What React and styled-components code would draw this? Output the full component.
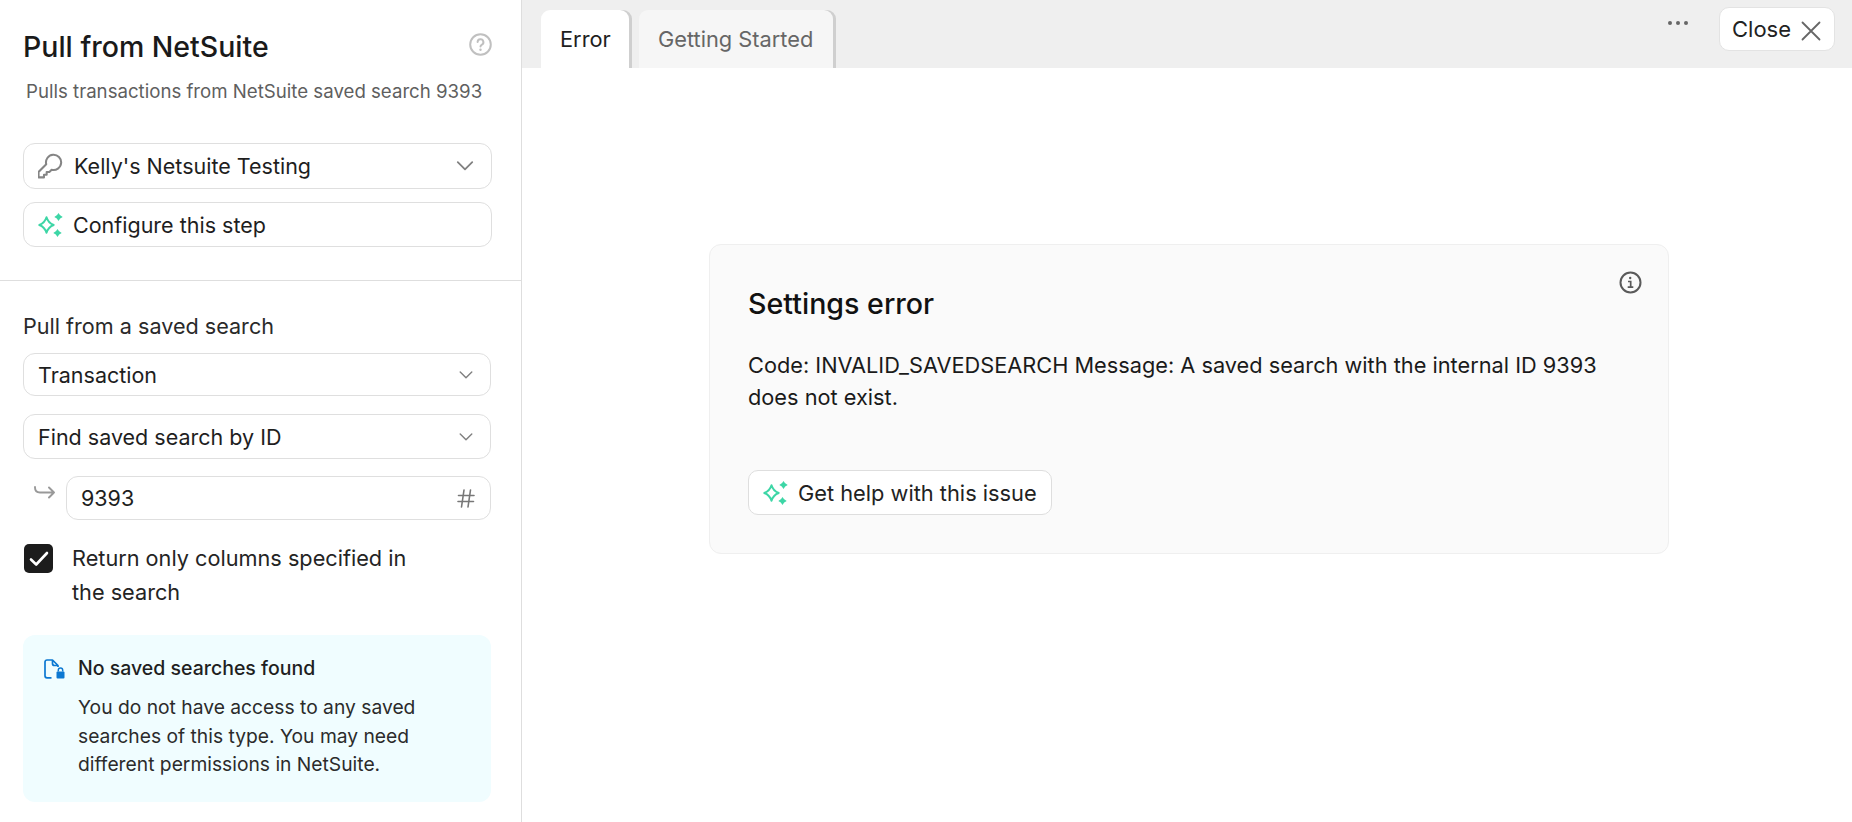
import React from "react";
import styled, { createGlobalStyle } from "styled-components";

const Global = createGlobalStyle`
  html, body { margin: 0; padding: 0; background: #fff; }
  body { font-family: Inter, "Noto Sans", sans-serif; color: #1c1c1c; }
  * { box-sizing: border-box; }
`;

const Page = styled.div`
  display: flex;
  width: 1852px;
  height: 822px;
  overflow: hidden;
`;

const Sidebar = styled.aside`
  flex: none;
  width: 522px;
  border-right: 1px solid #dedede;
  display: flex;
  flex-direction: column;
`;

const Head = styled.div`
  padding: 30px 29px 0 23px;
  border-bottom: 1px solid #dedede;
  height: 281px;
`;

const TitleRow = styled.div`
  display: flex;
  justify-content: space-between;
  align-items: center;
  height: 34px;
`;

const Title = styled.h1`
  margin: 0;
  font-size: 28.5px;
  font-weight: 500;
  line-height: 32px;
  color: #1a1a1a;
`;

const HelpSlot = styled.div`
  display: flex;
  margin-top: -6px;
`;

const Subtitle = styled.p`
  margin: 14px 0 0 3px;
  font-size: 18.65px;
  line-height: 26px;
  color: #5f5f5f;
  white-space: nowrap;
`;

const Field = styled.div`
  display: flex;
  align-items: center;
  width: ${(p) => p.$width || 469}px;
  height: ${(p) => p.$height || 45}px;
  margin-top: ${(p) => p.$top || 0}px;
  padding: 0 ${(p) => p.$padRight || 16}px 0 14px;
  border: 1px solid #dfdfdf;
  border-radius: 12px;
  background: #fff;
  font-size: 21.5px;
  color: #1e1e1e;
`;

const FieldText = styled.span`
  flex: 1;
  white-space: nowrap;
  margin-left: ${(p) => p.$gap || 0}px;
`;

const Body = styled.div`
  padding: 31px 0 0 23px;
`;

const Label = styled.div`
  font-size: 21.6px;
  line-height: 28px;
  color: #2a2a2a;
`;

const InputRow = styled.div`
  display: flex;
  align-items: flex-start;
  margin-top: 17px;
`;

const ArrowSlot = styled.div`
  display: flex;
  width: 43px;
  padding: 10px 0 0 11px;
`;

const CheckRow = styled.div`
  display: flex;
  margin-top: 24px;
`;

const CheckBox = styled.div`
  flex: none;
  width: 29px;
  height: 29px;
  margin: 0 19px 0 1px;
  border-radius: 5px;
  background: #1c1c1c;
  display: flex;
  align-items: center;
  justify-content: center;
`;

const CheckLabel = styled.div`
  width: 350px;
  font-size: 21.7px;
  line-height: 34px;
  margin-top: -3px;
  color: #242424;
`;

const Notice = styled.div`
  display: flex;
  width: 468px;
  height: 167px;
  margin-top: 26px;
  padding: 21px 0 0 21px;
  border-radius: 12px;
  background: #f0fdff;
`;

const NoticeIcon = styled.div`
  flex: none;
  width: 34px;
  padding-top: 3px;
`;

const NoticeTitle = styled.div`
  font-size: 19.5px;
  font-weight: 500;
  line-height: 24px;
  color: #1f1f1f;
`;

const NoticeText = styled.div`
  margin-top: 13px;
  font-size: 19.25px;
  line-height: 28.5px;
  color: #2b2b2b;
  white-space: pre-line;
`;

const Main = styled.main`
  flex: 1;
  display: flex;
  flex-direction: column;
`;

const TopBar = styled.div`
  flex: none;
  display: flex;
  align-items: flex-start;
  height: 68px;
  padding: 10px 17px 0 19px;
  background: #efefef;
`;

const Tab = styled.div`
  width: ${(p) => p.$width}px;
  height: 58px;
  margin-right: 10px;
  padding-left: 19px;
  display: flex;
  align-items: center;
  border-radius: 9px 9px 0 0;
  background: ${(p) => (p.$active ? "#fff" : "#f6f6f6")};
  box-shadow: 3px 0 0 #cfcfcf;
  font-size: 21.8px;
  color: ${(p) => (p.$active ? "#1e1e1e" : "#666")};
`;

const TopActions = styled.div`
  margin-left: auto;
  margin-top: -3px;
  display: flex;
  align-items: center;
`;

const Dots = styled.div`
  display: flex;
  gap: 4px;
  margin: -12px 31px 0 0;
`;

const Dot = styled.span`
  width: 4px;
  height: 4px;
  border-radius: 50%;
  background: #666;
`;

const CloseButton = styled.div`
  width: 116px;
  height: 44px;
  padding-left: 12px;
  display: flex;
  align-items: center;
  gap: 10px;
  border: 1px solid #e3e3e3;
  border-radius: 10px;
  background: #fff;
  font-size: 22px;
  color: #222;
`;

const CloseIcon = styled.span`
  display: flex;
  margin-top: 3px;
`;

const Card = styled.section`
  position: relative;
  width: 960px;
  height: 310px;
  margin: 176px 0 0 187px;
  padding: 42px 40px 0 38px;
  border: 1px solid #efefef;
  border-radius: 12px;
  background: #fafafa;
`;

const InfoButton = styled.div`
  position: absolute;
  top: 26px;
  right: 26px;
  width: 23px;
  height: 23px;
`;

const CardTitle = styled.h2`
  margin: 0;
  font-size: 28.6px;
  font-weight: 500;
  line-height: 34px;
  color: #111;
`;

const CardText = styled.p`
  margin: 28px 0 0;
  font-size: 21.75px;
  line-height: 32px;
  color: #1a1a1a;
`;

const HelpButton = styled.div`
  display: flex;
  align-items: center;
  gap: 10px;
  width: fit-content;
  height: 45px;
  margin-top: 57px;
  padding: 0 14px;
  border: 1px solid #dedede;
  border-radius: 10px;
  background: #fff;
  font-size: 21.8px;
  color: #222;
`;

const SparkleGlyph = ({ cx, cy, rx, ry, c = 0.18 }) => {
  const ax = rx * c;
  const ay = ry * c;
  return (
    <path d={`M${cx} ${cy - ry} Q${cx + ax} ${cy - ay} ${cx + rx} ${cy} Q${cx + ax} ${cy + ay} ${cx} ${cy + ry} Q${cx - ax} ${cy + ay} ${cx - rx} ${cy} Q${cx - ax} ${cy - ay} ${cx} ${cy - ry} Z`} />
  );
};

const Sparkle = () => (
  <svg width="25" height="24" viewBox="0 0 25 24" style={{ flex: "none" }}>
    <g fill="none" stroke="#3dd6a6" strokeWidth="2" strokeLinejoin="round">
      <SparkleGlyph cx={8.5} cy={12} rx={7.2} ry={7.8} c={0.25} />
    </g>
    <g fill="#3dd6a6">
      <SparkleGlyph cx={20.5} cy={4} rx={4.2} ry={4} c={0.3} />
      <SparkleGlyph cx={19.5} cy={20} rx={4.2} ry={4} c={0.3} />
    </g>
  </svg>
);

const Chevron = ({ size = 18, color = "#808080" }) => (
  <svg width={size} height={size} viewBox="0 0 18 18" style={{ flex: "none" }}>
    <path d="M2.5 5.5 L9 12 L15.5 5.5" fill="none" stroke={color} strokeWidth="1.6" strokeLinecap="round" strokeLinejoin="round" />
  </svg>
);

const Key = () => (
  <svg width="26" height="26" viewBox="1 0 24 24" style={{ flex: "none" }}>
    <path d="M8.6 10.4 A7 7 0 1 1 13.6 15.4 L11.5 17.5 H9 V20 H6.5 V22.5 H1.5 V17.5 Z" fill="none" stroke="#858585" strokeWidth="1.9" strokeLinejoin="round" />
  </svg>
);

const Help = () => (
  <svg width="23" height="23" viewBox="0 0 23 23" style={{ flex: "none" }}>
    <circle cx="11.5" cy="11.5" r="10.3" fill="none" stroke="#c0c0c0" strokeWidth="2" />
    <path d="M8.6 9 A2.9 2.9 0 1 1 12.6 11.8 C11.8 12.3 11.5 12.8 11.5 13.6" fill="none" stroke="#c0c0c0" strokeWidth="2" strokeLinecap="round" />
    <circle cx="11.5" cy="16.8" r="1.2" fill="#c0c0c0" />
  </svg>
);

const Info = () => (
  <svg width="23" height="23" viewBox="0 0 23 23">
    <circle cx="11.5" cy="11.5" r="10" fill="none" stroke="#5a5a5a" strokeWidth="2" />
    <circle cx="11.2" cy="7" r="1.2" fill="#5a5a5a" />
    <path d="M9 10.5 H11.7 V16 M8.7 16.2 H14.3" fill="none" stroke="#5a5a5a" strokeWidth="1.7" />
  </svg>
);

const ReturnArrow = () => (
  <svg width="21" height="13" viewBox="0 0 21 13">
    <path d="M1 1 V1.5 C1 5 3 6.5 6 6.5 H20 M15 1.5 L20 6.5 L15 11.5" fill="none" stroke="#999" strokeWidth="1.9" strokeLinecap="round" strokeLinejoin="round" />
  </svg>
);

const Hash = () => (
  <svg width="18" height="19" viewBox="0 0 18 19" style={{ flex: "none" }}>
    <path d="M1.5 6.5 H17 M1 12.5 H16.5 M7 1 L4.5 18 M13.5 1 L11 18" fill="none" stroke="#777" strokeWidth="1.6" strokeLinecap="round" />
  </svg>
);

const Check = () => (
  <svg width="20" height="16" viewBox="0 0 20 16">
    <path d="M2 8.5 L7.2 13.5 L18 2" fill="none" stroke="#fff" strokeWidth="2.6" strokeLinecap="round" strokeLinejoin="round" />
  </svg>
);

const FileLock = () => (
  <svg width="21" height="20" viewBox="0 0 21 20">
    <path d="M7.5 18.8 H3 A2 2 0 0 1 1 16.8 V3 A2 2 0 0 1 3 1 H8.5 L14 6.5 V8 M8.5 1 V4.5 A2 2 0 0 0 10.5 6.5 H14" fill="none" stroke="#0c78d2" strokeWidth="1.7" strokeLinejoin="round" />
    <rect x="12.5" y="12.5" width="8" height="7" rx="1" fill="#0c78d2" />
    <path d="M14.3 12.5 V11.3 A2.2 2.2 0 0 1 18.7 11.3 V12.5" fill="none" stroke="#0c78d2" strokeWidth="1.5" />
  </svg>
);

const CloseX = () => (
  <svg width="20" height="20" viewBox="0 0 20 20" style={{ flex: "none" }}>
    <path d="M1.5 1.5 L18.5 18.5 M18.5 1.5 L1.5 18.5" stroke="#666" strokeWidth="1.8" strokeLinecap="round" />
  </svg>
);

export default function App() {
  return (
    <Page>
      <Global />
      <Sidebar>
        <Head>
          <TitleRow>
            <Title>Pull from NetSuite</Title>
            <HelpSlot>
              <Help />
            </HelpSlot>
          </TitleRow>
          <Subtitle>Pulls transactions from NetSuite saved search 9393</Subtitle>
          <Field $height={46} $top={39}>
            <Key />
            <FieldText $gap={10}>Kelly's Netsuite Testing</FieldText>
            <Chevron size={20} />
          </Field>
          <Field $height={45} $top={13}>
            <Sparkle />
            <FieldText $gap={10}>Configure this step</FieldText>
          </Field>
        </Head>
        <Body>
          <Label>Pull from a saved search</Label>
          <Field $width={468} $height={43} $top={13}>
            <FieldText>Transaction</FieldText>
            <Chevron size={16} />
          </Field>
          <Field $width={468} $height={45} $top={18}>
            <FieldText>Find saved search by ID</FieldText>
            <Chevron size={16} />
          </Field>
          <InputRow>
            <ArrowSlot>
              <ReturnArrow />
            </ArrowSlot>
            <Field $width={425} $height={44} $padRight={15}>
              <FieldText>9393</FieldText>
              <Hash />
            </Field>
          </InputRow>
          <CheckRow>
            <CheckBox>
              <Check />
            </CheckBox>
            <CheckLabel>Return only columns specified in the search</CheckLabel>
          </CheckRow>
          <Notice>
            <NoticeIcon>
              <FileLock />
            </NoticeIcon>
            <div>
              <NoticeTitle>No saved searches found</NoticeTitle>
              <NoticeText>{"You do not have access to any saved\nsearches of this type. You may need\ndifferent permissions in NetSuite."}</NoticeText>
            </div>
          </Notice>
        </Body>
      </Sidebar>
      <Main>
        <TopBar>
          <Tab $active $width={88}>Error</Tab>
          <Tab $width={194}>Getting Started</Tab>
          <TopActions>
            <Dots>
              <Dot />
              <Dot />
              <Dot />
            </Dots>
            <CloseButton>
              Close
              <CloseIcon>
                <CloseX />
              </CloseIcon>
            </CloseButton>
          </TopActions>
        </TopBar>
        <Card>
          <InfoButton>
            <Info />
          </InfoButton>
          <CardTitle>Settings error</CardTitle>
          <CardText>Code: INVALID_SAVEDSEARCH Message: A saved search with the internal ID 9393 does not exist.</CardText>
          <HelpButton>
            <Sparkle />
            Get help with this issue
          </HelpButton>
        </Card>
      </Main>
    </Page>
  );
}
